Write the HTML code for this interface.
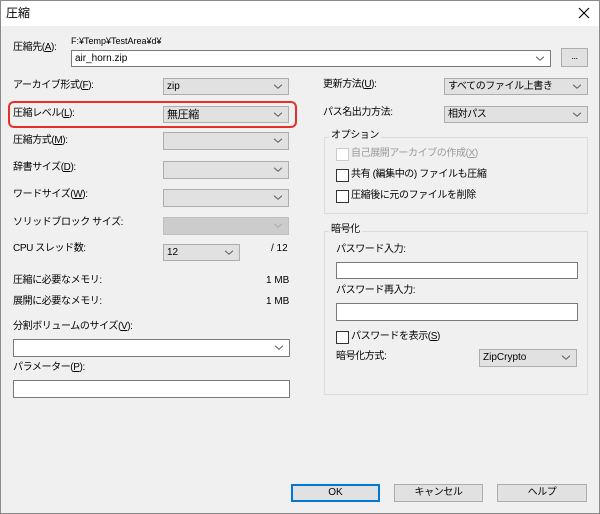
<!DOCTYPE html><html><head><meta charset="utf-8"><style>
*{box-sizing:border-box}
body{margin:0;width:600px;height:514px;overflow:hidden;background:#f0f0f0;font-family:"Liberation Sans","Noto Sans CJK JP",sans-serif;font-size:10px;letter-spacing:-0.4px;color:#000}
.l{letter-spacing:0}
.win{position:absolute;left:0;top:0;width:600px;height:514px;border:1px solid #8a8a8a;background:#f0f0f0}
.tb{position:absolute;left:0;top:0;width:598px;height:25px;background:#fff}
.a{position:absolute;white-space:nowrap;line-height:14px}
.cb{position:absolute;background:#e1e1e1;border:1px solid #adadad}
.cb.w{background:#fff;border-color:#7a7a7a}
.cb.d{background:#ccc;border-color:#bfbfbf}
.cb span{position:absolute;left:3px;top:1px;line-height:14px}
.ar{position:absolute;right:5px;top:4px;width:10px;height:7px}
.in{position:absolute;background:#fff;border:1px solid #7a7a7a}
.g{position:absolute;border:1px solid #dcdcdc}
.gt{position:absolute;background:#f0f0f0;padding:0 2px;line-height:14px}
.ck{position:absolute;width:13px;height:13px;background:#fff;border:1px solid #333}
.bt{position:absolute;background:#e1e1e1;border:1px solid #adadad;text-align:center;line-height:16px}
</style></head><body><div class="win">
<div class="tb"></div>
<div class="a" style="left:5px;top:5px;font-size:12px;letter-spacing:0">圧縮</div>
<svg style="position:absolute;left:577px;top:6px" width="12" height="12"><path d="M1 1L11 11M11 1L1 11" stroke="#000" stroke-width="1.1"/></svg>

<div class="a" style="left:12px;top:40px">圧縮先(<u>A</u>):</div>
<div class="a l" style="left:70px;top:33px;font-size:9px">F:¥Temp¥TestArea¥d¥</div>
<div class="cb w" style="left:70px;top:49px;width:480px;height:17px"><span class="l">air_horn.zip</span><svg class="ar" viewBox="0 0 11 8"><path d="M1 2L5.5 6L10 2" fill="none" stroke="#555"/></svg></div>
<div class="bt" style="left:560px;top:47px;width:27px;height:19px;font-size:9px;line-height:14px">...</div>

<div class="a" style="left:12px;top:78px">アーカイブ形式(<u>F</u>):</div>
<div class="a" style="left:12px;top:106px">圧縮レベル(<u>L</u>):</div>
<div class="a" style="left:12px;top:133px">圧縮方式(<u>M</u>):</div>
<div class="a" style="left:12px;top:160px">辞書サイズ(<u>D</u>):</div>
<div class="a" style="left:12px;top:187px">ワードサイズ(<u>W</u>):</div>
<div class="a" style="left:12px;top:215px">ソリッドブロック サイズ:</div>
<div class="a" style="left:12px;top:241px">CPU スレッド数:</div>
<div class="a" style="left:12px;top:273px">圧縮に必要なメモリ:</div>
<div class="a" style="left:12px;top:294px">展開に必要なメモリ:</div>
<div class="a l" style="left:265px;top:273px">1 MB</div>
<div class="a l" style="left:265px;top:294px">1 MB</div>
<div class="a l" style="left:270px;top:241px">/ 12</div>

<div class="cb" style="left:162px;top:77px;width:126px;height:17px"><span class="l">zip</span><svg class="ar" viewBox="0 0 11 8"><path d="M1 2L5.5 6L10 2" fill="none" stroke="#555"/></svg></div>
<div class="cb" style="left:162px;top:105px;width:126px;height:17px"><span style="font-size:11px">無圧縮</span><svg class="ar" viewBox="0 0 11 8"><path d="M1 2L5.5 6L10 2" fill="none" stroke="#555"/></svg></div>
<div class="cb" style="left:162px;top:131px;width:126px;height:18px"><svg class="ar" viewBox="0 0 11 8"><path d="M1 2L5.5 6L10 2" fill="none" stroke="#555"/></svg></div>
<div class="cb" style="left:162px;top:160px;width:126px;height:18px"><svg class="ar" viewBox="0 0 11 8"><path d="M1 2L5.5 6L10 2" fill="none" stroke="#555"/></svg></div>
<div class="cb" style="left:162px;top:188px;width:126px;height:18px"><svg class="ar" viewBox="0 0 11 8"><path d="M1 2L5.5 6L10 2" fill="none" stroke="#555"/></svg></div>
<div class="cb d" style="left:162px;top:216px;width:126px;height:18px"><svg class="ar" viewBox="0 0 11 8"><path d="M1 2L5.5 6L10 2" fill="none" stroke="#aaa"/></svg></div>
<div class="cb" style="left:162px;top:243px;width:77px;height:17px"><span class="l">12</span><svg class="ar" viewBox="0 0 11 8"><path d="M1 2L5.5 6L10 2" fill="none" stroke="#555"/></svg></div>

<div style="position:absolute;left:7px;top:100px;width:289px;height:27px;border:2px solid #e8302a;border-radius:6px"></div>

<div class="a" style="left:12px;top:319px">分割ボリュームのサイズ(<u>V</u>):</div>
<div class="cb w" style="left:12px;top:338px;width:277px;height:18px"><svg class="ar" viewBox="0 0 11 8"><path d="M1 2L5.5 6L10 2" fill="none" stroke="#555"/></svg></div>
<div class="a" style="left:12px;top:360px">パラメーター(<u>P</u>):</div>
<div class="in" style="left:12px;top:379px;width:277px;height:18px"></div>

<div class="a" style="left:322px;top:77px">更新方法(<u>U</u>):</div>
<div class="a" style="left:322px;top:105px">パス名出力方法:</div>
<div class="cb" style="left:443px;top:77px;width:144px;height:17px"><span>すべてのファイル上書き</span><svg class="ar" viewBox="0 0 11 8"><path d="M1 2L5.5 6L10 2" fill="none" stroke="#555"/></svg></div>
<div class="cb" style="left:443px;top:105px;width:144px;height:17px"><span>相対パス</span><svg class="ar" viewBox="0 0 11 8"><path d="M1 2L5.5 6L10 2" fill="none" stroke="#555"/></svg></div>

<div class="g" style="left:323px;top:136px;width:264px;height:77px"></div>
<div class="gt" style="left:328px;top:128px">オプション</div>
<div class="ck" style="left:335px;top:147px;border-color:#ccc"></div>
<div class="a" style="left:350px;top:146px;color:#9a9a9a">自己展開アーカイブの作成(<u>X</u>)</div>
<div class="ck" style="left:335px;top:168px"></div>
<div class="a" style="left:350px;top:167px">共有 (編集中の) ファイルも圧縮</div>
<div class="ck" style="left:335px;top:189px"></div>
<div class="a" style="left:350px;top:188px">圧縮後に元のファイルを削除</div>

<div class="g" style="left:323px;top:230px;width:264px;height:164px"></div>
<div class="gt" style="left:328px;top:222px">暗号化</div>
<div class="a" style="left:335px;top:242px">パスワード入力:</div>
<div class="in" style="left:335px;top:261px;width:242px;height:17px"></div>
<div class="a" style="left:335px;top:283px">パスワード再入力:</div>
<div class="in" style="left:335px;top:302px;width:242px;height:18px"></div>
<div class="ck" style="left:335px;top:330px"></div>
<div class="a" style="left:350px;top:329px">パスワードを表示(<u>S</u>)</div>
<div class="a" style="left:335px;top:349px">暗号化方式:</div>
<div class="cb" style="left:478px;top:348px;width:98px;height:18px"><span class="l">ZipCrypto</span><svg class="ar" viewBox="0 0 11 8"><path d="M1 2L5.5 6L10 2" fill="none" stroke="#555"/></svg></div>

<div class="bt l" style="left:290px;top:483px;width:89px;height:18px;border:2px solid #0078d7;line-height:14px">OK</div>
<div class="bt" style="left:393px;top:483px;width:89px;height:18px">キャンセル</div>
<div class="bt" style="left:496px;top:483px;width:90px;height:18px">ヘルプ</div>
</div></body></html>
